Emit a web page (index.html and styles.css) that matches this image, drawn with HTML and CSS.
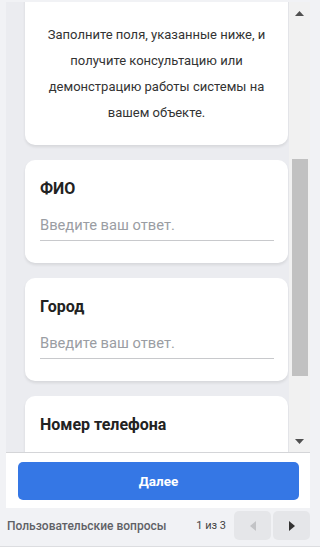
FILE: index.html
```html
<!DOCTYPE html>
<html lang="ru">
<head>
<meta charset="utf-8">
<title>Форма</title>
<link rel="stylesheet" href="styles.css">
</head>
<body>
<div class="app">
  <div class="panel">
    <div class="scroll-area">
      <div class="content">
        <div class="track">
          <div class="card intro">
            <p>Заполните поля, указанные ниже, и получите консультацию или демонстрацию работы системы на вашем объекте.</p>
          </div>
          <div class="card field">
            <div class="label">ФИО</div>
            <div class="input">Введите ваш ответ.</div>
          </div>
          <div class="card field">
            <div class="label">Город</div>
            <div class="input">Введите ваш ответ.</div>
          </div>
          <div class="card field">
            <div class="label">Номер телефона</div>
            <div class="input"></div>
          </div>
        </div>
      </div>
      <div class="scrollbar">
        <div class="sb-arrow">
          <svg width="9" height="5" viewBox="0 0 9 5"><path d="M0 5 L4.5 0 L9 5 Z" fill="#505050"/></svg>
        </div>
        <div class="sb-thumb"></div>
        <div class="sb-arrow sb-down">
          <svg width="9" height="5" viewBox="0 0 9 5"><path d="M0 0 L9 0 L4.5 5 Z" fill="#505050"/></svg>
        </div>
      </div>
    </div>
    <div class="actions">
      <button class="next-btn" type="button">Далее</button>
    </div>
  </div>
  <div class="footer">
    <span class="section-name">Пользовательские вопросы</span>
    <span class="pager">1 из 3</span>
    <div class="nav">
      <button class="nav-btn" type="button" aria-label="Назад">
        <svg width="6" height="10" viewBox="0 0 6 10"><path d="M6 0 L0 5 L6 10 Z" fill="#c2c3c6"/></svg>
      </button>
      <button class="nav-btn" type="button" aria-label="Вперёд">
        <svg width="6" height="10" viewBox="0 0 6 10"><path d="M0 0 L6 5 L0 10 Z" fill="#333"/></svg>
      </button>
    </div>
  </div>
</div>
</body>
</html>
```
FILE: styles.css
```css
html, body {
  margin: 0;
  padding: 0;
}
body {
  background: #f1f2f5;
  font-family: Roboto, "Noto Sans", sans-serif;
  width: 320px;
  height: 547px;
  overflow: hidden;
}
.app {
  display: flex;
  flex-direction: column;
  height: 547px;
}
.panel {
  margin: 2px 10px 0 6px;
  display: flex;
  flex-direction: column;
}
.scroll-area {
  display: flex;
  height: 450px;
  border-bottom: 1px solid #d4d5d8;
}
.content {
  flex: 1;
  overflow: hidden;
  background: #ebecf0;
  padding: 0 1px 0 19px;
}
.track {
  display: flex;
  flex-direction: column;
  gap: 15px;
  margin-top: -30px;
}
.card {
  background: #fff;
  border-radius: 10px;
  box-shadow: 0 2px 3px rgba(0, 0, 0, 0.09);
}
.intro {
  padding: 50px 16px 19px;
}
.intro p {
  margin: 0;
  text-align: center;
  font-size: 13px;
  line-height: 26px;
  color: #333;
}
.field {
  padding: 17px 14px 22px 15px;
}
.label {
  font-size: 16px;
  line-height: 24px;
  font-weight: 700;
  color: #222;
}
.input {
  margin-top: 9px;
  height: 30px;
  line-height: 30px;
  font-size: 14.7px;
  color: #9a9da3;
  border-bottom: 1px solid #c8c9cc;
}
.scrollbar {
  width: 21px;
  background: #f1f1f1;
  display: flex;
  flex-direction: column;
  align-items: center;
}
.sb-arrow {
  height: 22px;
  width: 100%;
  display: flex;
  align-items: center;
  justify-content: center;
}
.sb-down {
  margin-top: auto;
}
.sb-thumb {
  margin-top: 135px;
  width: 16px;
  height: 217px;
  background: #c1c1c1;
}
.actions {
  background: #fff;
  padding: 9px 11px 8px 12px;
}
.next-btn {
  display: block;
  width: 100%;
  height: 38px;
  border: none;
  border-radius: 5px;
  background: #3577e5;
  color: #fff;
  font-family: Roboto, "Noto Sans", sans-serif;
  font-size: 13.5px;
  font-weight: 700;
  padding: 0;
}
.footer {
  flex: 1;
  display: flex;
  align-items: center;
  padding: 0 10px 3px 7px;
  border-bottom: 1px solid #dcdde0;
}
.section-name {
  font-size: 12px;
  font-weight: 500;
  color: #5f6166;
}
.pager {
  margin-left: auto;
  margin-right: 8px;
  font-size: 11px;
  color: #444;
}
.nav {
  display: flex;
  gap: 2px;
}
.nav-btn {
  width: 37px;
  height: 29px;
  border: none;
  border-radius: 5px;
  background: #e5e6e9;
  display: flex;
  align-items: center;
  justify-content: center;
  padding: 0;
}
```
